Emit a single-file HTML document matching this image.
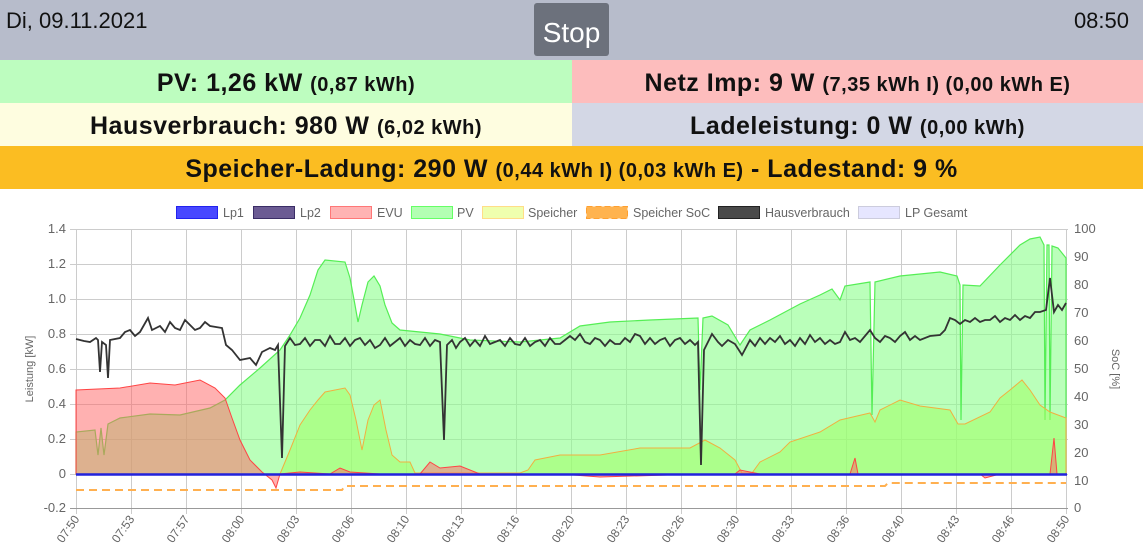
<!DOCTYPE html>
<html><head><meta charset="utf-8"><style>
body{margin:0;width:1143px;height:554px;overflow:hidden;background:#fff;font-family:"Liberation Sans",sans-serif;position:relative}
.hdr{position:absolute;left:0;top:0;width:1143px;height:60px;background:#b7bccb}
.date{position:absolute;left:6px;top:8px;font-size:22px;color:#111}
.time{position:absolute;right:14px;top:8px;font-size:22px;color:#111}
.stop{position:absolute;left:534px;top:3px;width:75px;height:53px;background:#6c717c;border-radius:3px;color:#fff;font-size:28px;line-height:59px;text-align:center}
.cell{position:absolute;height:43px;line-height:46px;text-align:center;font-weight:bold;font-size:25px;letter-spacing:0.5px;color:#111;white-space:nowrap}
.cell small{font-size:20px}
svg{position:absolute;left:0;top:190px}
</style></head><body>
<div class="hdr"><div class="date">Di, 09.11.2021</div><div class="stop">Stop</div><div class="time">08:50</div></div>
<div class="cell" style="left:0;top:60px;width:572px;background:#bdfdbf">PV: 1,26 kW <small>(0,87 kWh)</small></div>
<div class="cell" style="left:572px;top:60px;width:571px;background:#fdbdbd">Netz Imp: 9 W <small>(7,35 kWh I) (0,00 kWh E)</small></div>
<div class="cell" style="left:0;top:103px;width:572px;background:#fefde0">Hausverbrauch: 980 W <small>(6,02 kWh)</small></div>
<div class="cell" style="left:572px;top:103px;width:571px;background:#d3d7e5">Ladeleistung: 0 W <small>(0,00 kWh)</small></div>
<div class="cell" style="left:0;top:146px;width:1143px;height:43px;background:#fbbd22">Speicher-Ladung: 290 W <small>(0,44 kWh I) (0,03 kWh E)</small> - Ladestand: 9 %</div>
<svg width="1143" height="364" viewBox="0 190 1143 364" font-family="Liberation Sans, sans-serif" font-size="12" fill="#666">
<g font-size="12.5">
<rect x="176.5" y="206.5" width="41" height="12" fill="#4848ff" stroke="#2222ee"/><text x="223" y="217">Lp1</text>
<rect x="253.5" y="206.5" width="41" height="12" fill="#6b5b93" stroke="#3a2d66"/><text x="300" y="217">Lp2</text>
<rect x="330.5" y="206.5" width="41" height="12" fill="#ffb3b3" stroke="#f77"/><text x="377" y="217">EVU</text>
<rect x="411.5" y="206.5" width="41" height="12" fill="#b3ffb3" stroke="#6f6"/><text x="457" y="217">PV</text>
<rect x="482.5" y="206.5" width="41" height="12" fill="#efffae" stroke="#fd8"/><text x="528" y="217">Speicher</text>
<rect x="586.5" y="206.5" width="41" height="12" fill="#ffb34f" stroke="#ffa030" stroke-dasharray="6,3"/><text x="633" y="217">Speicher SoC</text>
<rect x="718.5" y="206.5" width="41" height="12" fill="#4a4a4a" stroke="#222"/><text x="765" y="217">Hausverbrauch</text>
<rect x="858.5" y="206.5" width="41" height="12" fill="#e6e6ff" stroke="#ccd"/><text x="905" y="217">LP Gesamt</text>
</g>
<g stroke="#ccc" stroke-width="1">
<path d="M70 229.5H1068M70 264.5H1068M70 299.5H1068M70 334.5H1068M70 369.5H1068M70 404.5H1068M70 439.5H1068M70 474.5H1068"/>
<path d="M76.5 229V514M131.5 229V514M186.5 229V514M241.5 229V514M296.5 229V514M351.5 229V514M406.5 229V514M461.5 229V514M516.5 229V514M571.5 229V514M626.5 229V514M681.5 229V514M736.5 229V514M791.5 229V514M846.5 229V514M901.5 229V514M956.5 229V514M1011.5 229V514M1066.5 229V514"/>
</g>
<path d="M70 508.5H1068" stroke="#999"/>
<!-- PV -->
<path d="M76 474V432L95 430L98 455L101 428L104 455L108 424L120 418L150 414L180 415L210 408L225 400L240 385L260 368L280 350L290 335L300 318L310 295L318 270L325 260L345 262L350 278L355 305L358 322L362 305L368 282L374 276L380 286L385 305L392 323L400 330L440 334L470 340L520 342L560 338L580 326L610 322L650 320L698 318L700 390L703 318L712 316L728 325L740 345L750 330L770 320L800 304L820 295L832 289L840 300L845 286L870 282L872 415L875 282L900 276L940 272L957 276L960 285L961 420L963 285L980 286L1000 265L1020 245L1030 239L1040 237L1044 245L1045 420L1047 245L1049 245L1050 420L1052 246L1058 248L1066 258V474Z" fill="rgba(140,255,140,0.6)" stroke="#55ee55" stroke-width="1.2"/>
<!-- Speicher -->
<path d="M280 474L290 450L300 425L310 410L318 400L325 392L345 388L350 395L356 420L362 450L368 420L374 405L380 400L386 430L392 455L400 462L410 462L415 473L520 473L528 470L535 460L560 455L600 455L640 448L690 448L705 440L720 448L735 460L742 473L752 473L760 462L780 452L790 442L820 432L840 420L870 413L875 422L880 410L900 400L920 406L950 410L958 424L965 424L990 412L1000 398L1010 390L1022 380L1030 390L1040 405L1050 412L1066 418V474Z" fill="rgba(160,255,100,0.55)" stroke="#f0b040" stroke-width="1"/>
<!-- EVU on top -->
<path d="M76 474V390L120 388L150 383L175 385L200 380L215 388L225 398L232 418L240 440L250 460L262 472L272 480L276 488L280 474L300 472L330 474L340 468L350 472L380 474L420 474L430 462L440 468L460 466L480 474L560 474L600 477L700 474L735 474L740 470L760 474L850 474L855 458L858 474L900 474L980 474L985 478L1000 474L1050 474L1054 438L1057 474L1066 474Z" fill="rgba(255,100,100,0.5)" stroke="#f44" stroke-width="1"/>
<!-- Hausverbrauch -->
<polyline fill="none" stroke="#333" stroke-width="1.8" points="76,339 84,341 90,342 96,338 98,340 100,372 102,342 106,345 108,378 110,340 120,338 125,332 130,330 135,336 140,332 148,318 152,330 160,326 165,332 170,322 175,328 180,330 185,320 190,325 195,330 200,328 205,322 210,326 222,328 226,345 232,350 240,360 250,358 256,365 262,352 270,348 275,350 278,345 282,458 285,346 290,338 295,345 300,344 305,338 310,346 315,340 320,340 325,346 330,336 335,344 340,344 345,338 350,346 355,340 360,338 365,345 370,340 375,348 380,345 385,338 390,346 395,342 400,338 405,346 410,340 415,344 420,345 425,338 430,346 435,340 440,342 444,440 447,345 452,340 456,348 460,342 465,338 470,346 475,340 480,346 485,336 490,344 495,342 500,340 505,346 510,338 515,344 520,345 525,338 530,346 535,342 540,340 545,346 550,338 555,344 560,344 565,340 570,336 575,340 580,334 585,342 590,344 595,338 600,340 605,346 610,340 615,344 620,344 625,338 630,342 635,334 640,336 645,344 650,338 655,344 660,340 665,338 670,346 675,340 680,338 685,344 690,340 695,345 698,342 701,465 704,350 712,334 718,342 722,346 728,340 735,344 742,355 750,340 755,346 760,338 765,344 770,338 775,342 780,336 785,344 790,340 795,346 800,338 805,344 810,335 815,342 820,338 825,344 830,340 835,344 840,342 845,332 850,340 855,338 860,342 865,336 870,330 875,338 880,342 885,336 890,338 895,342 900,336 905,332 910,340 915,336 920,340 930,336 940,335 945,330 950,318 955,320 960,324 965,320 970,322 975,318 980,322 985,320 990,320 995,316 1000,322 1005,318 1010,320 1015,315 1020,320 1025,316 1030,318 1035,312 1040,312 1046,310 1050,278 1054,312 1058,305 1062,310 1066,303"/>
<path d="M76 490H342L345 486H885L888 483H1066" fill="none" stroke="#ffb050" stroke-width="2" stroke-dasharray="8,5"/>
<path d="M76 474.5H1067" stroke="#2222dd" stroke-width="2.5"/>
<g text-anchor="end" font-size="13">
<text x="66" y="233">1.4</text><text x="66" y="268">1.2</text><text x="66" y="303">1.0</text><text x="66" y="338">0.8</text><text x="66" y="373">0.6</text><text x="66" y="408">0.4</text><text x="66" y="443">0.2</text><text x="66" y="478">0</text><text x="66" y="512">-0.2</text>
</g>
<g font-size="13">
<text x="1074" y="233">100</text><text x="1074" y="261">90</text><text x="1074" y="289">80</text><text x="1074" y="317">70</text><text x="1074" y="345">60</text><text x="1074" y="373">50</text><text x="1074" y="401">40</text><text x="1074" y="429">30</text><text x="1074" y="457">20</text><text x="1074" y="485">10</text><text x="1074" y="512">0</text>
</g>
<text transform="translate(33,369) rotate(-90)" text-anchor="middle" font-size="11">Leistung [kW]</text>
<text transform="translate(1112,369) rotate(90)" text-anchor="middle" font-size="11">SoC [%]</text>
<g text-anchor="end" font-size="12">
<text transform="translate(80,519) rotate(-55)">07:50</text>
<text transform="translate(135,519) rotate(-55)">07:53</text>
<text transform="translate(190,519) rotate(-55)">07:57</text>
<text transform="translate(245,519) rotate(-55)">08:00</text>
<text transform="translate(300,519) rotate(-55)">08:03</text>
<text transform="translate(355,519) rotate(-55)">08:06</text>
<text transform="translate(410,519) rotate(-55)">08:10</text>
<text transform="translate(465,519) rotate(-55)">08:13</text>
<text transform="translate(520,519) rotate(-55)">08:16</text>
<text transform="translate(575,519) rotate(-55)">08:20</text>
<text transform="translate(630,519) rotate(-55)">08:23</text>
<text transform="translate(685,519) rotate(-55)">08:26</text>
<text transform="translate(740,519) rotate(-55)">08:30</text>
<text transform="translate(795,519) rotate(-55)">08:33</text>
<text transform="translate(850,519) rotate(-55)">08:36</text>
<text transform="translate(905,519) rotate(-55)">08:40</text>
<text transform="translate(960,519) rotate(-55)">08:43</text>
<text transform="translate(1015,519) rotate(-55)">08:46</text>
<text transform="translate(1070,519) rotate(-55)">08:50</text>
</g>
</svg>
</body></html>
